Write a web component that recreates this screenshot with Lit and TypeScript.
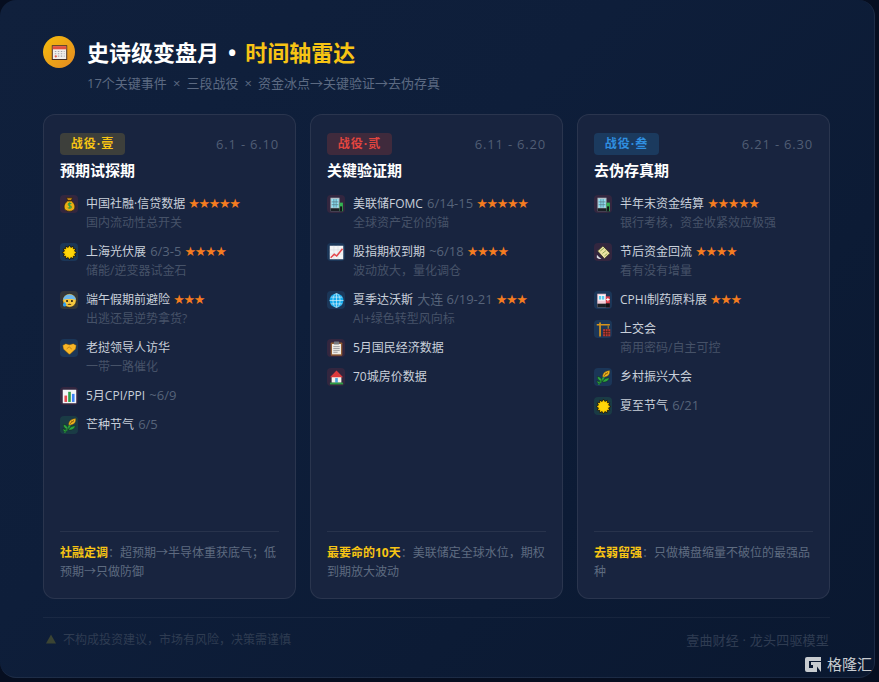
import { LitElement, css, html, svg } from 'lit';
import { customElement } from 'lit/decorators.js';

const icons: Record<string, unknown> = {
  bag: svg`<path d="M4.8 .8h6.4L9.8 4H6.2z" fill="#c98a12" stroke="#2e2210" stroke-width=".8"/><path d="M5.8 4.2h4.4c2.2 1.8 3.6 3.8 3.6 6.4 0 3.2-2.6 4.6-5.8 4.6s-5.8-1.4-5.8-4.6c0-2.6 1.4-4.6 3.6-6.4z" fill="#eeae14" stroke="#2e2210" stroke-width=".8"/><path d="M10 7.2c-.6-.9-3.4-.9-3.4.7s3.4 1.1 3.4 2.8-3 1.5-3.8.5M8.2 5.6v7" fill="none" stroke="#2f9e44" stroke-width="1.1"/>`,
  sun: svg`<path d="M8 .2l1.5 2.4 2.4-1.4.2 2.7 2.7.2-1.4 2.4L15.8 8l-2.4 1.5 1.4 2.4-2.7.2-.2 2.7-2.4-1.4L8 15.8l-1.5-2.4-2.4 1.4-.2-2.7-2.7-.2 1.4-2.4L.2 8l2.4-1.5-1.4-2.4 2.7-.2.2-2.7 2.4 1.4z" fill="#ffd000" stroke="#16140c" stroke-width=".9"/><circle cx="8" cy="8" r="4.2" fill="#ffd60a"/>`,
  fear: svg`<circle cx="8" cy="8" r="7.2" fill="#f7c83f" stroke="#2e2718" stroke-width=".6"/><path d="M1 7.4a7.1 7.1 0 0 1 14 0c-2-1.4-12-1.4-14 0z" fill="#6fb9ec"/><circle cx="5.4" cy="8.6" r="1.1" fill="#1f1a12"/><circle cx="10.6" cy="8.6" r="1.1" fill="#1f1a12"/><path d="M5.8 12.6c1-1.6 3.4-1.6 4.4 0z" fill="#3a2012"/><path d="M2.8 9.2c1 1.6 1.8 2.4 1.8 3.5a1.8 1.8 0 0 1-3.6 0c0-1.1.8-1.9 1.8-3.5z" fill="#2f9ff0"/>`,
  hands: svg`<path d="M.8 4.6L4 2.8l4 1.2 4-1.2 3.2 1.8-.6 4L8.6 14a1 1 0 0 1-1.2 0L1.4 8.6z" fill="#f7b626" stroke="#5f4410" stroke-width=".5"/><path d="M5 8.4l2.6-2.2 2.8 2.4" fill="none" stroke="#b97a12" stroke-width=".9"/>`,
  bars: svg`<rect x=".8" y=".8" width="14.4" height="14.4" fill="#f4f5f6"/><rect x="2.6" y="7" width="2.8" height="6.8" fill="#e5484d"/><rect x="6.6" y="3" width="2.8" height="10.8" fill="#2f9e44"/><rect x="10.6" y="5.2" width="2.8" height="8.6" fill="#3b82f6"/>`,
  wheat: svg`<path d="M2.6 15.4C5.4 12 8 9.4 9.2 6" fill="none" stroke="#2aa03e" stroke-width="1.8"/><path d="M1.4 6.8c3 .2 5 2.4 5 5.4-3-.2-5-2.4-5-5.4zM14.4 8.8c-3-.6-6 .6-7.6 3.8 3.2 1 6.2-.8 7.6-3.8zM.8 11.6c2 0 3.4 1 4 3-2 .4-3.6-.8-4-3z" fill="#2ea540" stroke="#0f2e18" stroke-width=".5"/><path d="M7.2 7.4C6.8 3.6 9.4 1 14.6.6c.6 4.8-2.8 7.4-7.4 6.8z" fill="#f0b41f" stroke="#5f430c" stroke-width=".4"/><path d="M8.4 6.4l4.4-4.2M10 2.8l.5 2.4M12.8 3.4l-2.4.6M8.6 4.6l.4 1.4" stroke="#8a5d0c" stroke-width=".7" fill="none"/>`,
  office: svg`<rect x="1.6" y=".8" width="9.6" height="14.4" fill="#b4c3ca"/><rect x="11.2" y="6" width="3.6" height="9.2" fill="#33b552"/><rect x="2.8" y="2.2" width="7.2" height="9" fill="#8be2f6"/><path d="M5.2 2.2v9M7.6 2.2v9M2.8 5.2h7.2M2.8 8.2h7.2" stroke="#54707c" stroke-width=".7"/><rect x="1.6" y="12" width="9.6" height="3.2" fill="#1a1f24"/><rect x="11.8" y="10" width="2.2" height="5.2" fill="#101418"/>`,
  line: svg`<rect x=".8" y=".8" width="14.4" height="14.4" fill="#f4f5f6"/><path d="M.8 5.2h14.4M.8 9.6h14.4M5.2 .8v14.4M9.6 .8v14.4" stroke="#cfd6dc" stroke-width=".5"/><path d="M1.8 13.6l3.8-3.8 2.6 2L14.4 4" fill="none" stroke="#e5484d" stroke-width="1.6"/>`,
  globe: svg`<circle cx="8" cy="8" r="7.4" fill="#14a8ea"/><path d="M.6 8h14.8M8 .6v14.8M1.8 4.4h12.4M1.8 11.6h12.4" stroke="#d8f1fb" stroke-width=".7" fill="none"/><ellipse cx="8" cy="8" rx="3.8" ry="7.4" fill="none" stroke="#d8f1fb" stroke-width=".7"/>`,
  clip: svg`<rect x="1.8" y="1.6" width="12.4" height="14" rx=".8" fill="#8f5c33"/><rect x="3.2" y="3.2" width="9.6" height="11" fill="#efece5"/><rect x="5.2" y=".6" width="5.6" height="3" rx=".5" fill="#77797d"/><path d="M4.6 6h6.8M4.6 8h6.8M4.6 10h6.8M4.6 12h4.6" stroke="#8f9296" stroke-width=".9"/>`,
  house: svg`<path d="M2.8 7h10.4v6.6H2.8z" fill="#f6f2ea"/><path d="M8 .6L15 7.6H1z" fill="#dc3a3c"/><rect x="6.6" y="8.6" width="2.8" height="5" fill="#4aa3df"/><rect x="1" y="13.4" width="14" height="2" fill="#2f9e44"/>`,
  cash: svg`<path d="M1.6 6.4L7.4 1l7.6 7.8-6 5.8z" fill="#ece3a2" stroke="#2e2d1c" stroke-width=".8"/><path d="M4.6 6.4l3.8-3M6.8 9l3.8-3M9 11.6l3-2.4" stroke="#7f9a4a" stroke-width=".9"/><path d="M1 10.4c1.6 2 2.8 3.2 4.8 4.6-1.8.2-3.6-.2-5-1.6z" fill="#dcdfe3"/>`,
  hospital: svg`<rect x="1.4" y=".8" width="9.2" height="14.4" fill="#f4cdd7"/><rect x="10.6" y="3.6" width="4.2" height="11.6" fill="#dc404d"/><rect x="2.4" y="2.2" width="7.2" height="6" fill="#f8fafb"/><rect x="3.2" y="3.2" width="2.4" height="3.8" fill="#5ecbee"/><rect x="6.4" y="3.2" width="2.4" height="3.8" fill="#5ecbee"/><rect x="1.4" y="11.4" width="9.2" height="3.8" fill="#1c2126"/><path d="M12.7 5.2v3.6M10.9 7h3.6" stroke="#fff" stroke-width="1.1"/><rect x="10.6" y="11" width="4.2" height="4.2" fill="#101418"/>`,
  crane: svg`<path d="M.8 2h14v1.8H.8zM3.4 .6h1.8v14.8H3.4z" fill="#d5941c"/><path d="M13 3.8v3.4" stroke="#d5941c" stroke-width="1"/><rect x="7.6" y="7.6" width="7.6" height="7.6" fill="#bb3a32"/><path d="M7.6 10.1h7.6M7.6 12.6h7.6M10.1 7.6v7.6M12.7 7.6v7.6" stroke="#3a1d1a" stroke-width=".7"/>`,
  calendar: svg`<rect x="1.2" y="1.6" width="13.6" height="13" fill="#f1efea" stroke="#3f2a20" stroke-width=".9"/><rect x="1.6" y="2" width="12.8" height="3" fill="#e2513f"/><path d="M3.6 7h1.4M6.4 7h1.4M9.2 7h1.4M12 7h.8M3.6 9.2h1.4M6.4 9.2h1.4M9.2 9.2h1.4M12 9.2h.8M6.4 11.4h1.4M9.2 11.4h1.4M12 11.4h.8" stroke="#a2a5a8" stroke-width="1"/><path d="M3.4 11.6h2.2M4.5 10.5v2.2" stroke="#e2513f" stroke-width="1"/>`,
};

interface Item {
  icon: string;
  tone: string;
  name: string;
  meta?: string;
  stars?: number;
  sub?: string;
}

interface Phase {
  tag: string;
  tagTone: string;
  range: string;
  title: string;
  items: Item[];
  lead: string;
  note: string;
}

const phases: Phase[] = [
  {
    tag: '战役·壹',
    tagTone: 'yellow',
    range: '6.1 - 6.10',
    title: '预期试探期',
    items: [
      { icon: 'bag', tone: 'red', name: '中国社融·信贷数据', stars: 5, sub: '国内流动性总开关' },
      { icon: 'sun', tone: 'blue', name: '上海光伏展', meta: '6/3-5', stars: 4, sub: '储能/逆变器试金石' },
      { icon: 'fear', tone: 'yellow', name: '端午假期前避险', stars: 3, sub: '出逃还是逆势拿货?' },
      { icon: 'hands', tone: 'blue', name: '老挝领导人访华', sub: '一带一路催化' },
      { icon: 'bars', tone: 'red', name: '5月CPI/PPI', meta: '~6/9' },
      { icon: 'wheat', tone: 'green', name: '芒种节气', meta: '6/5' },
    ],
    lead: '社融定调',
    note: '：超预期→半导体重获底气；低预期→只做防御',
  },
  {
    tag: '战役·贰',
    tagTone: 'red',
    range: '6.11 - 6.20',
    title: '关键验证期',
    items: [
      { icon: 'office', tone: 'red', name: '美联储FOMC', meta: '6/14-15', stars: 5, sub: '全球资产定价的锚' },
      { icon: 'line', tone: 'blue', name: '股指期权到期', meta: '~6/18', stars: 4, sub: '波动放大，量化调仓' },
      { icon: 'globe', tone: 'blue', name: '夏季达沃斯', meta: '大连 6/19-21', stars: 3, sub: 'AI+绿色转型风向标' },
      { icon: 'clip', tone: 'red', name: '5月国民经济数据' },
      { icon: 'house', tone: 'red', name: '70城房价数据' },
    ],
    lead: '最要命的10天',
    note: '：美联储定全球水位，期权到期放大波动',
  },
  {
    tag: '战役·叁',
    tagTone: 'blue',
    range: '6.21 - 6.30',
    title: '去伪存真期',
    items: [
      { icon: 'office', tone: 'red', name: '半年末资金结算', stars: 5, sub: '银行考核，资金收紧效应极强' },
      { icon: 'cash', tone: 'red', name: '节后资金回流', stars: 4, sub: '看有没有增量' },
      { icon: 'hospital', tone: 'blue', name: 'CPHI制药原料展', stars: 3 },
      { icon: 'crane', tone: 'blue', name: '上交会', sub: '商用密码/自主可控' },
      { icon: 'wheat', tone: 'blue', name: '乡村振兴大会' },
      { icon: 'sun', tone: 'green', name: '夏至节气', meta: '6/21' },
    ],
    lead: '去弱留强',
    note: '：只做横盘缩量不破位的最强品种',
  },
];

@customElement('app-root')
export class AppRoot extends LitElement {
  static override styles = css`
    :host {
      display: block;
      width: 879px;
      height: 682px;
      box-sizing: border-box;
      padding: 0 4px 4px 0;
      background: #060e20;
      font-family: 'Open Sans', 'Noto Sans CJK SC', sans-serif;
      position: relative;
      overflow: hidden;
    }

    .panel {
      box-sizing: border-box;
      height: 100%;
      display: flex;
      flex-direction: column;
      padding: 36px 44px 0 43px;
      border: 1px solid rgba(255, 255, 255, 0.06);
      border-width: 0 1px 1px 0;
      border-radius: 16px;
      background: linear-gradient(135deg, #10203c 0%, #0e1e3a 40%, #0a1830 100%);
    }

    .head {
      display: flex;
      align-items: center;
      gap: 12px;
      height: 32px;
    }

    .badge {
      width: 32px;
      height: 32px;
      border-radius: 50%;
      display: flex;
      align-items: center;
      justify-content: center;
      background: linear-gradient(135deg, #f5bd0c, #e48a22);
    }

    .badge svg {
      width: 17px;
      height: 17px;
    }

    h1 {
      margin: 0;
      font-size: 22px;
      line-height: 32px;
      font-weight: 700;
      color: #fff;
      white-space: nowrap;
    }

    h1 i {
      font-style: normal;
      margin: 0 9px;
    }

    h1 span {
      color: #f7c414;
    }

    .lede {
      display: flex;
      margin: 5px 0 0 44px;
      font-size: 13px;
      line-height: 20px;
      color: #5c6a82;
      white-space: nowrap;
    }

    .lede i {
      font-style: normal;
      width: 19.5px;
      text-align: center;
    }

    .cols {
      display: grid;
      grid-template-columns: repeat(3, 253px);
      gap: 14px;
      margin-top: 21px;
    }

    .card {
      box-sizing: border-box;
      height: 485px;
      display: flex;
      flex-direction: column;
      padding: 18px 16px 0;
      border: 1px solid rgba(255, 255, 255, 0.08);
      border-radius: 12px;
      background: #18243f;
    }

    .card-top {
      display: flex;
      align-items: center;
      justify-content: space-between;
      height: 22px;
    }

    .tag {
      box-sizing: border-box;
      width: 65px;
      height: 22px;
      line-height: 22px;
      border-radius: 4px;
      text-align: center;
      font-size: 12px;
      font-weight: 700;
      letter-spacing: 1px;
      white-space: nowrap;
    }

    .tag.yellow {
      color: #f7c414;
      background: #3d3f3b;
    }

    .tag.red {
      color: #e2453f;
      background: #3f2a3c;
    }

    .tag.blue {
      color: #2f8fe0;
      background: #1b3a5e;
    }

    .range {
      font-size: 13px;
      letter-spacing: 0.8px;
      color: #505d74;
    }

    h2 {
      margin: 5px 0 15px;
      font-size: 15px;
      line-height: 20px;
      font-weight: 700;
      color: #fff;
    }

    .items {
      flex: 1;
      display: flex;
      flex-direction: column;
      gap: 11px;
    }

    .item {
      display: grid;
      grid-template-columns: 18px 1fr;
      column-gap: 8px;
    }

    .tile {
      width: 18px;
      height: 18px;
      border-radius: 4px;
      display: flex;
      align-items: center;
      justify-content: center;
    }

    .tile svg {
      width: 15px;
      height: 15px;
    }

    .tile.red {
      background: #33263f;
    }

    .tile.blue {
      background: #1b3658;
    }

    .tile.yellow {
      background: #33363a;
    }

    .tile.green {
      background: #1a3b45;
    }

    .name {
      height: 18px;
      font-size: 12px;
      line-height: 18px;
      color: #c9d0da;
      white-space: nowrap;
    }

    .meta {
      font-size: 13px;
      line-height: 1;
      margin-left: 1px;
      color: #566379;
    }

    .stars {
      color: #f57c20;
      font-size: 13px;
      line-height: 1;
      font-family: 'DejaVu Sans', sans-serif;
      letter-spacing: -1.4px;
    }

    .sub {
      grid-column: 2;
      padding-top: 1px;
      font-size: 12px;
      line-height: 18px;
      color: #465268;
    }

    .note {
      margin: 0 0 17px;
      padding-top: 11px;
      border-top: 1px solid rgba(255, 255, 255, 0.07);
      font-size: 12px;
      line-height: 19px;
      color: #5e6b80;
    }

    .note b {
      color: #f7c414;
    }

    .foot {
      display: flex;
      align-items: center;
      justify-content: space-between;
      height: 42px;
      margin-top: 18px;
      border-top: 1px solid rgba(255, 255, 255, 0.05);
      font-size: 12px;
      color: #2f3c52;
    }

    .warn {
      display: flex;
      align-items: center;
      gap: 7px;
      padding-left: 3px;
    }

    .warn svg {
      width: 10px;
      height: 10px;
    }

    .credit {
      font-size: 13px;
      letter-spacing: 0.2px;
      padding-right: 1px;
    }

    .mark {
      position: absolute;
      right: 7px;
      bottom: 8px;
      display: flex;
      align-items: center;
      gap: 5px;
      color: #c8ccd0;
      font-size: 15px;
      line-height: 20px;
    }

    .mark svg {
      width: 18px;
      height: 17px;
    }
  `;

  private renderItem(item: Item) {
    return html`
      <div class="item">
        <div class="tile ${item.tone}">
          <svg viewBox="0 0 16 16">${icons[item.icon]}</svg>
        </div>
        <div class="name">
          ${item.name}
          ${item.meta ? html`<span class="meta">${item.meta}</span>` : ''}
          ${item.stars ? html`<span class="stars">${'★'.repeat(item.stars)}</span>` : ''}
        </div>
        ${item.sub ? html`<div class="sub">${item.sub}</div>` : ''}
      </div>
    `;
  }

  private renderPhase(phase: Phase) {
    return html`
      <section class="card">
        <div class="card-top">
          <div class="tag ${phase.tagTone}">${phase.tag}</div>
          <div class="range">${phase.range}</div>
        </div>
        <h2>${phase.title}</h2>
        <div class="items">${phase.items.map((item) => this.renderItem(item))}</div>
        <p class="note"><b>${phase.lead}</b>${phase.note}</p>
      </section>
    `;
  }

  override render() {
    return html`
      <div class="panel">
        <header class="head">
          <div class="badge"><svg viewBox="0 0 16 16">${icons.calendar}</svg></div>
          <h1>史诗级变盘月<i>•</i><span>时间轴雷达</span></h1>
        </header>
        <div class="lede">17个关键事件<i>×</i>三段战役<i>×</i>资金冰点→关键验证→去伪存真</div>
        <div class="cols">${phases.map((phase) => this.renderPhase(phase))}</div>
        <footer class="foot">
          <div class="warn">
            <svg viewBox="0 0 12 11"><path d="M6 0l6 11H0z" fill="#3b4433"/></svg>
            不构成投资建议，市场有风险，决策需谨慎
          </div>
          <div class="credit">壹曲财经 · 龙头四驱模型</div>
        </footer>
      </div>
      <div class="mark">
        <svg viewBox="0 0 18 17">
          <path d="M1 3a2 2 0 0 1 2-2h14v4H5v7h4V9H7V6h10v10H3a2 2 0 0 1-2-2z" fill="#c8ccd0" />
          <path d="M13 10.5l4 5.5h-4z" fill="#0a1830" />
        </svg>
        格隆汇
      </div>
    `;
  }
}

declare global {
  interface HTMLElementTagNameMap {
    'app-root': AppRoot;
  }
}
